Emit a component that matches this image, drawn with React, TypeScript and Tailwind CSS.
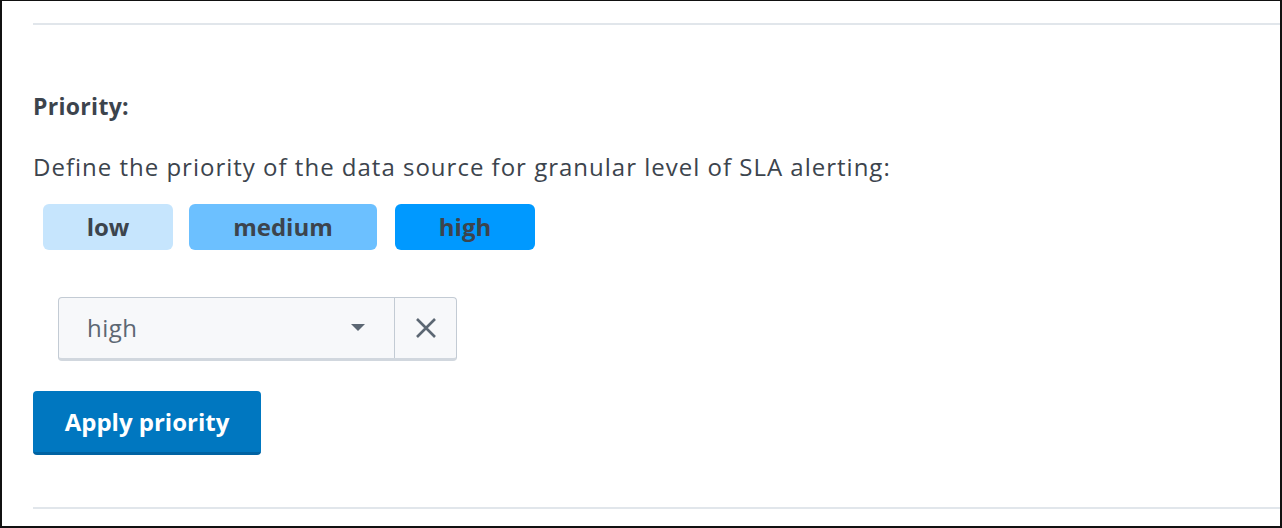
export default function App() {
  const chips = [
    { label: "low", cls: "w-[130px] bg-[#c6e5fd]" },
    { label: "medium", cls: "ml-[16px] w-[188px] bg-[#6cc0ff]" },
    { label: "high", cls: "ml-[18px] w-[140px] bg-[#0099ff]" },
  ];

  return (
    <div
      className="h-[528px] w-[1282px] bg-white border-t border-l-2 border-r-2 border-b-2 border-[#111] text-[#3c444d] overflow-hidden"
      style={{ fontFamily: "'Open Sans', Lato, sans-serif" }}
    >
      <div className="ml-[31px] pt-[22px]">
        <div className="h-[2px] bg-[#e1e6eb]" />

        <div className="mt-[66px] text-[23px] font-bold leading-[30px] tracking-[0.3px]">Priority:</div>

        <p className="mt-[31px] text-[24px] leading-[30px] tracking-[1px]">
          Define the priority of the data source for granular level of SLA alerting:
        </p>

        <div className="mt-[22px] ml-[10px] flex">
          {chips.map((c) => (
            <div
              key={c.label}
              className={`h-[46px] rounded-[6px] flex items-center justify-center text-[24px] font-bold ${c.cls}`}
            >
              {c.label}
            </div>
          ))}
        </div>

        <div className="mt-[47px] ml-[25px] flex h-[64px] w-[399px] rounded-[4px] border border-[#c3cbd4] border-b-[3px] border-b-[#d1d7de] bg-[#f7f8fa]">
          <div className="flex flex-1 items-center pl-[28px] pr-[29px] text-[24px] tracking-[0.5px] text-[#5c6773]">
            <span className="flex-1">high</span>
            <svg width="14" height="8" viewBox="0 0 14 8">
              <path d="M0 0 H14 L7 7 Z" fill="#5c6773" />
            </svg>
          </div>
          <div className="flex w-[62px] items-center justify-center border-l border-[#c3cbd4]">
            <svg width="22" height="22" viewBox="0 0 22 22">
              <path d="M2 2 L20 20 M20 2 L2 20" stroke="#5c6773" strokeWidth="2.6" />
            </svg>
          </div>
        </div>

        <button className="mt-[30px] flex h-[64px] w-[228px] items-center justify-center rounded-[4px] border-b-[3px] border-[#0063a3] bg-[#0077c0] text-[24px] font-bold text-white">
          Apply priority
        </button>

        <div className="mt-[52px] h-[2px] bg-[#e1e6eb]" />
      </div>
    </div>
  );
}
